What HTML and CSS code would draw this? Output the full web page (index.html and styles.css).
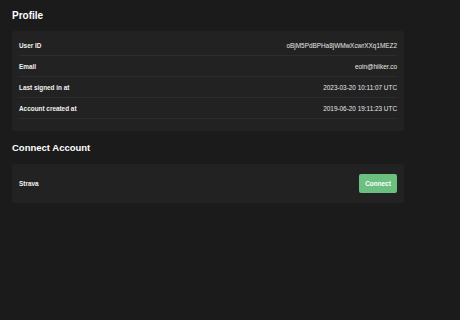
FILE: index.html
```html
<!DOCTYPE html>
<html lang="en">
<head>
    <meta charset="UTF-8">
    <title>Profile</title>
    <link rel="stylesheet" href="styles.css">
</head>
<body>

    <!-- Profile -->
    <h2 class="section-title">Profile</h2>
    <div class="card profile-card">
        <div class="row">
            <span class="label">User ID</span>
            <span class="value">oBjM5PdBPHa8jWMwXcwrXXq1MEZ2</span>
        </div>
        <div class="row">
            <span class="label">Email</span>
            <span class="value">eoin@hiiker.co</span>
        </div>
        <div class="row">
            <span class="label">Last signed in at</span>
            <span class="value">2023-03-20 10:11:07 UTC</span>
        </div>
        <div class="row">
            <span class="label">Account created at</span>
            <span class="value">2019-06-20 19:11:23 UTC</span>
        </div>
    </div>

    <!-- Connect Account -->
    <h2 class="section-title connect-title">Connect Account</h2>
    <div class="card connect-card">
        <span class="label">Strava</span>
        <button class="connect-btn">Connect</button>
    </div>

</body>
</html>
```

FILE: styles.css
```css
body {
    font-family: "Liberation Sans", Arial, sans-serif;
    background-color: #1b1b1b;
    color: #fff;
    margin: 0;
    padding: 0 56px 0 12px;
}

.section-title {
    font-size: 10px;
    font-weight: bold;
    margin: 0;
    padding-top: 10px;
    height: 21px;
    line-height: 11px;
}

.connect-title {
    font-size: 9.5px;
    padding-top: 11px;
    height: 22px;
}

.card {
    background-color: #222;
    border-radius: 2px;
}

.profile-card {
    padding: 4px 7px 12px;
}

.row {
    display: flex;
    justify-content: space-between;
    align-items: center;
    height: 20px;
    border-bottom: 1px solid #2d2d2d;
}

.label {
    font-size: 6.4px;
    font-weight: bold;
    color: #f2f2f2;
}

.value {
    font-size: 6.4px;
    color: #e8e8e8;
}

.connect-card {
    display: flex;
    justify-content: space-between;
    align-items: center;
    padding: 10px 7px;
}

.connect-btn {
    background-color: #6bc07f;
    color: #fff;
    font-family: inherit;
    font-size: 6.4px;
    font-weight: bold;
    border: none;
    border-radius: 2px;
    width: 38px;
    height: 19px;
    padding: 0;
    cursor: pointer;
}
```
